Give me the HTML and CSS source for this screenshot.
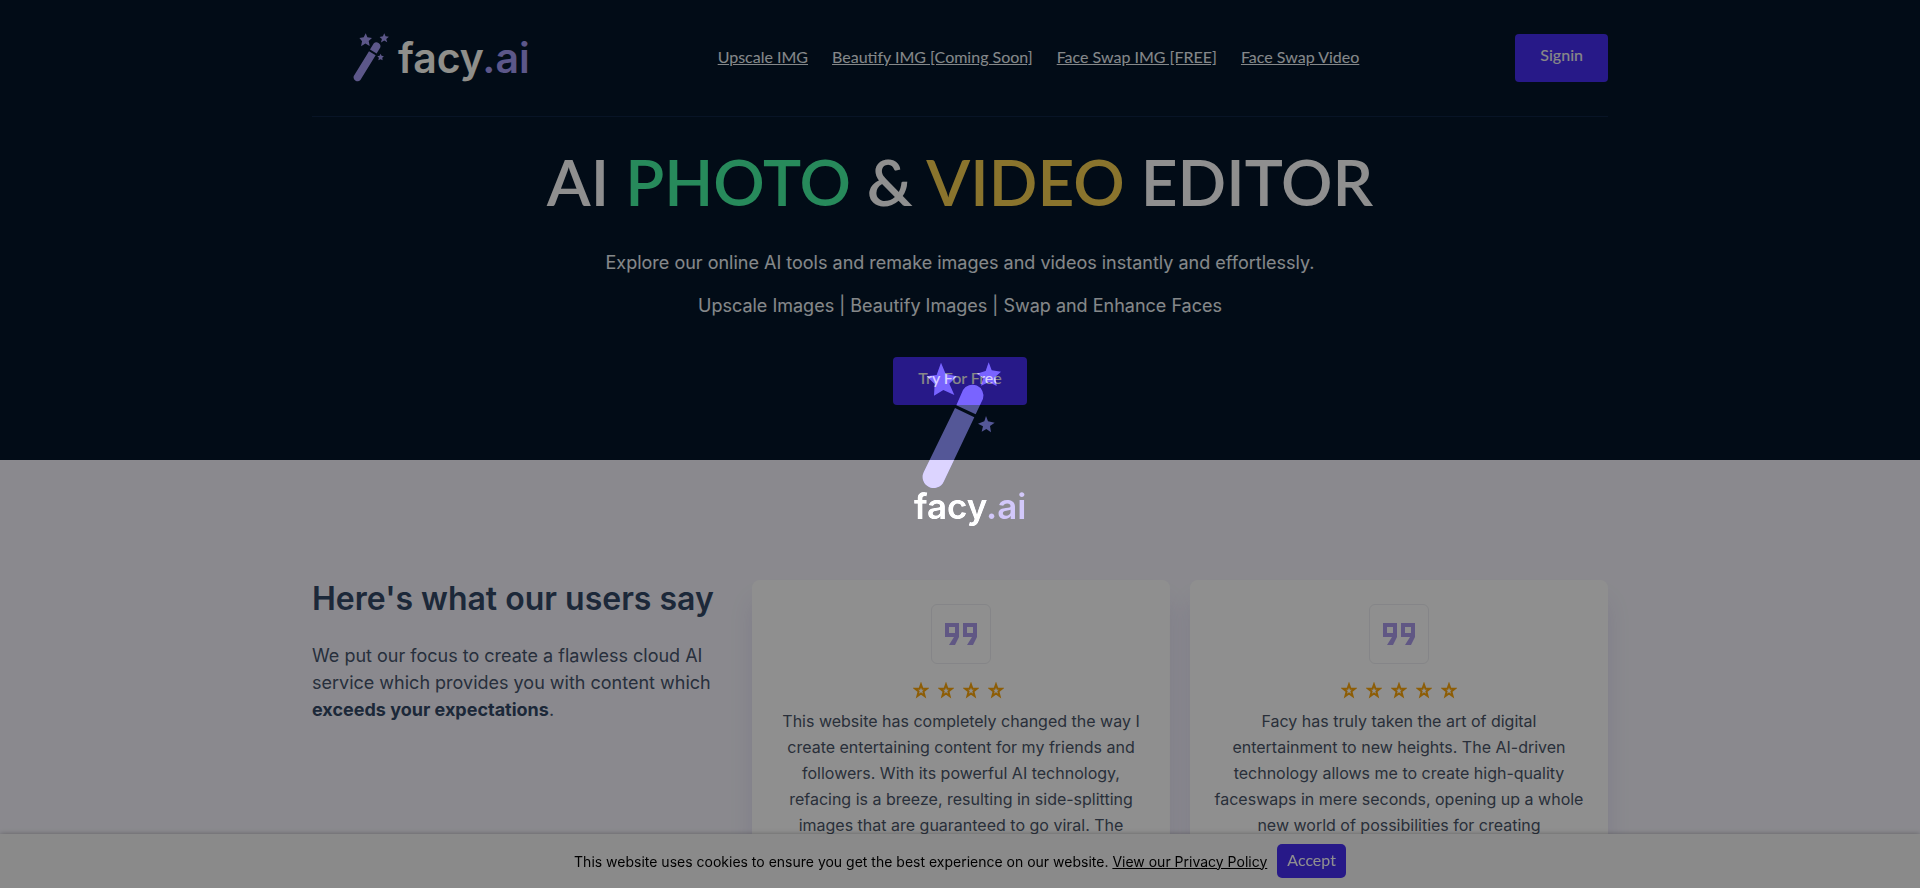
FILE: index.html
```html
<!DOCTYPE html>
<html lang="en">
<head>
<meta charset="utf-8">
<title>facy.ai</title>
<link rel="stylesheet" href="styles.css">
</head>
<body>
<svg class="defs" aria-hidden="true">
  <symbol id="wand" viewBox="186 68 240 378">
    <path d="M243 70 257 104 290 111 268 133 283 167 250 152 222 169 224 134 200 111 230 107Z"/>
    <path d="M386 69 395 93 423 97 406 112 410 140 387 128 363 139 370 116 350 103 377 95Z"/>
    <path d="M378 230 384 246 404 250 390 260 393 279 379 269 365 277 369 261 354 253 373 246Z"/>
    <path d="M289 198 309 152A33 33 0 0 1 369 178L347 225Z"/>
    <path d="M285 206 343 234 251 427A33 33 0 0 1 191 399Z"/>
  </symbol>
  <symbol id="wand-small" viewBox="160 98 108 148">
    <path d="M198 99 203 111 217 113 207 122 210 137 197 130 184 138 187 123 179 113 192 111Z"/>
    <path d="M254 99 258 108 268 109 260 116 263 126 254 121 244 127 247 116 240 110 250 108Z"/>
    <path d="M243 161 246 167 253 168 248 173 249 180 243 177 236 180 238 173 233 168 240 167Z"/>
    <path d="M211 148 222 130A12 12 0 0 1 242 142L231 160Z"/>
    <path d="M208 153 228 165 182 240A12 12 0 0 1 162 228Z"/>
  </symbol>
  <symbol id="star" viewBox="0 0 16 17">
    <path d="M8 2.500 9.500 6.800H13.800L10.400 9.500 11.600 14 8 11.500 4.400 14 5.600 9.500 2.200 6.800H6.500Z"/>
  </symbol>
  <symbol id="quote" viewBox="0 0 33 22">
    <path fill-rule="evenodd" d="M0 0H14V14L10 22H4L9 14H0ZM4 4V10H10V4ZM18 0H32V14L28 22H22L27 14H18ZM22 4V10H28V4Z"/>
  </symbol>
</svg>
<section class="hero">
  <div class="container">
    <header class="header">
      <a class="brand" href="#"><svg class="brand-wand"><use href="#wand-small"/></svg><span>facy<em>.ai</em></span></a>
      <nav class="nav">
        <a href="#">Upscale IMG</a>
        <a href="#">Beautify IMG [Coming Soon]</a>
        <a href="#">Face Swap IMG [FREE]</a>
        <a href="#">Face Swap Video</a>
      </nav>
      <button class="button" type="button">Signin</button>
    </header>
    <div class="intro">
      <h1>AI <span class="green">PHOTO</span> &amp; <span class="gold">VIDEO</span> EDITOR</h1>
      <p>Explore our online AI tools and remake images and videos instantly and effortlessly.</p>
      <p>Upscale Images | Beautify Images | Swap and Enhance Faces</p>
      <button class="button" type="button">Try For Free</button>
    </div>
  </div>
</section>
<main class="container reviews">
  <div class="lead">
    <h2>Here's what our users say</h2>
    <p>We put our focus to create a flawless cloud AI service which provides you with content which <strong>exceeds your expectations</strong>.</p>
  </div>
  <article class="card">
    <div class="quote"><svg><use href="#quote"/></svg></div>
    <div class="stars partial" role="img" aria-label="4 stars"><svg><use href="#star"/></svg><svg><use href="#star"/></svg><svg><use href="#star"/></svg><svg><use href="#star"/></svg></div>
    <p>This website has completely changed the way I create entertaining content for my friends and followers. With its powerful AI technology, refacing is a breeze, resulting in side-splitting images that are guaranteed to go viral. The</p>
  </article>
  <article class="card">
    <div class="quote"><svg><use href="#quote"/></svg></div>
    <div class="stars" role="img" aria-label="5 stars"><svg><use href="#star"/></svg><svg><use href="#star"/></svg><svg><use href="#star"/></svg><svg><use href="#star"/></svg><svg><use href="#star"/></svg></div>
    <p>Facy has truly taken the art of digital entertainment to new heights. The AI-driven technology allows me to create high-quality faceswaps in mere seconds, opening up a whole new world of possibilities for creating</p>
  </article>
</main>
<aside class="cookies">
  <p>This website uses cookies to ensure you get the best experience on our website. <a href="#">View our Privacy Policy</a></p>
  <button type="button">Accept</button>
</aside>
<div class="shade"></div>
<div class="loader">
  <svg class="loader-wand"><use href="#wand"/></svg>
  <span>facy<em>.ai</em></span>
</div>
</body>
</html>
```
FILE: styles.css
```css
* { box-sizing: border-box; }
html, body { height: 100%; }
body {
  margin: 0;
  overflow: hidden;
  background: #f6f5fd;
  color: #4a5568;
  font-family: Inter, "Liberation Sans", sans-serif;
}
h1, h2, p { margin: 0; }
em { font-style: normal; }
.defs { position: absolute; width: 0; height: 0; }
.container { width: 100%; max-width: 1296px; margin: 0 auto; }

.hero { background: #051729; padding-bottom: 55px; }
.header {
  display: flex;
  align-items: center;
  justify-content: space-between;
  height: 117px;
  padding-bottom: 1px;
  border-bottom: 1px solid #0f2444;
}
.brand {
  display: flex;
  align-items: center;
  gap: 9px;
  margin: 0 32px 0 41px;
  color: #fffff8;
  font-size: 41px;
  font-weight: 600;
  line-height: 48px;
  text-decoration: none;
}
.brand em { color: #a59cf4; }
.brand-wand { width: 36px; height: 49px; fill: #a59cf4; }
.nav { display: flex; gap: 24px; padding-bottom: 2px; }
.nav a { color: #edf2f7; font: 16px/24px Lato, sans-serif; }
.button {
  height: 48px;
  padding: 0 25px 6px;
  border: 0;
  border-radius: 4px;
  background: #462ef3;
  color: #f1f1f1;
  font: 500 16px/24px Lato, sans-serif;
}
.intro { display: flex; flex-direction: column; align-items: center; text-align: center; }
.intro h1 {
  margin: 25px 0 27px;
  color: #fff;
  font: 600 64px/80px Lato, sans-serif;
}
.intro .green { color: #46f6a3; }
.intro .gold { color: #f6cf50; }
.intro p { margin-bottom: 16px; color: #edf2f7; font-size: 18px; line-height: 27px; }
.intro .button { margin-top: 22px; }

.reviews {
  display: grid;
  grid-template-columns: 420px 1fr 1fr;
  column-gap: 20px;
  padding-top: 120px;
}
.lead { padding-right: 12px; }
.lead h2 { margin-bottom: 24px; color: #334866; font-size: 32px; font-weight: 600; line-height: 38px; }
.lead p { color: #46546c; font-size: 18px; line-height: 27px; }
.lead strong { color: #334866; }
.card {
  display: flex;
  flex-direction: column;
  align-items: center;
  min-height: 400px;
  padding: 24px;
  border-radius: 8px;
  background: #fff;
  box-shadow: 0 20px 25px rgba(60, 40, 160, .1);
  text-align: center;
}
.card p { font-size: 16px; line-height: 26px; }
.quote {
  display: grid;
  place-items: center;
  width: 60px;
  height: 60px;
  border: 1px solid #edeef2;
  border-radius: 6px;
}
.quote svg { width: 33px; height: 22px; fill: #ac9cec; }
.stars { display: flex; gap: 9px; margin: 18px 0 9px; }
.stars.partial { padding-right: 6px; }
.stars svg { width: 16px; height: 17px; fill: none; stroke: #fba70c; stroke-width: 2; }

.cookies {
  position: fixed;
  right: 0;
  bottom: 0;
  left: 0;
  display: flex;
  align-items: center;
  justify-content: center;
  gap: 10px;
  height: 54px;
  background: #f7f7f7;
  box-shadow: 0 0 5px rgba(0, 0, 0, .3);
  color: #000;
  font-size: 14px;
}
.cookies a { color: inherit; }
.cookies button {
  height: 34px;
  padding: 0 10px 2px;
  border: 0;
  border-radius: 5px;
  background: #462ef3;
  color: #fff;
  font: 16px/24px Lato, sans-serif;
}
.shade { position: fixed; inset: 0; background: rgba(0, 0, 0, .44); }
.loader {
  position: fixed;
  top: 50%;
  left: 50%;
  width: 112px;
  height: 164px;
  margin: -82px 0 0 -46px;
  display: flex;
  flex-direction: column;
  mix-blend-mode: plus-lighter;
  color: #8d8d8d;
  font-size: 35px;
  font-weight: 600;
  line-height: 36px;
}
.loader em { color: #483f6c; }
.loader-wand { width: 80px; height: 126px; margin-left: 8px; fill: #524b80; }
```
